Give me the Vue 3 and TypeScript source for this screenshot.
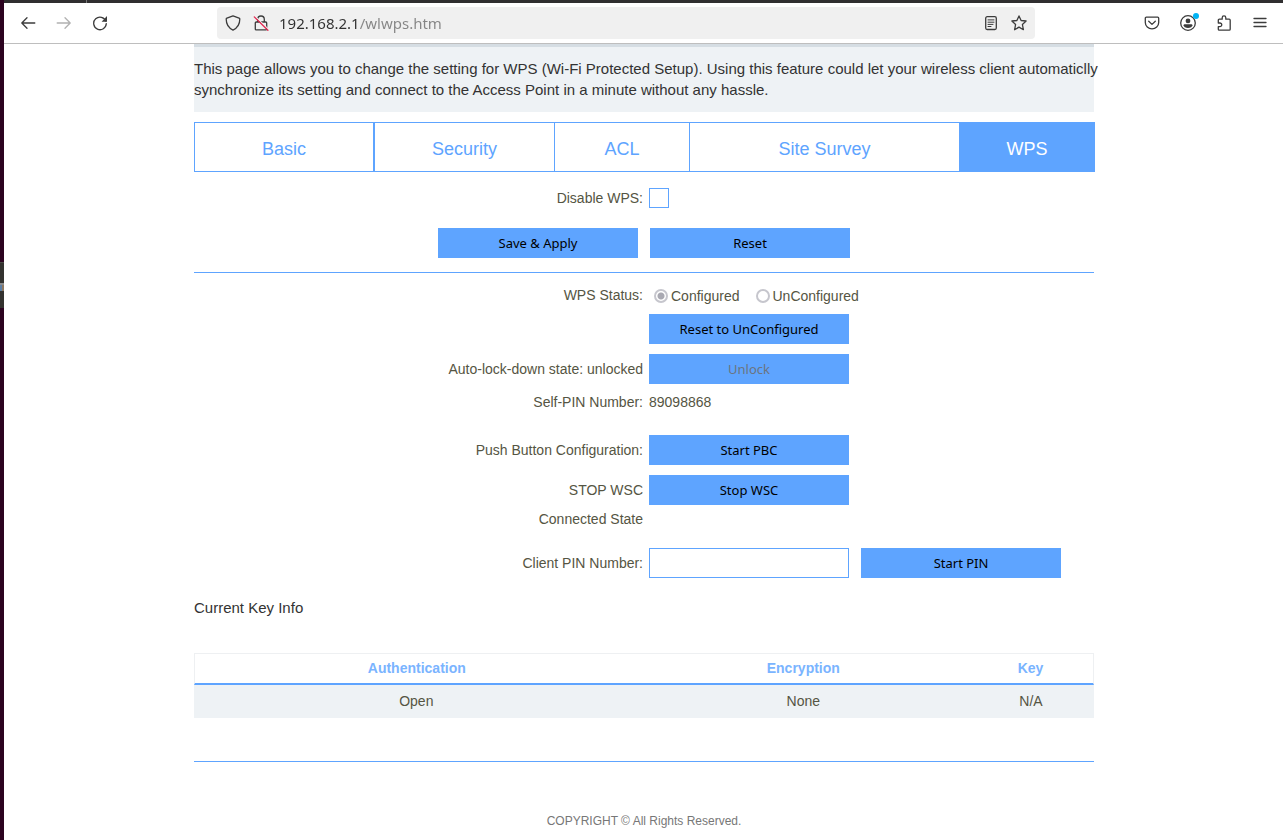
<script setup lang="ts">
import { ref } from 'vue'

interface Tab {
  label: string
  share: number
}

interface KeyInfo {
  authentication: string
  encryption: string
  key: string
}

const tabs: Tab[] = [
  { label: 'Basic', share: 20 },
  { label: 'Security', share: 20 },
  { label: 'ACL', share: 15 },
  { label: 'Site Survey', share: 30 },
  { label: 'WPS', share: 15 },
]
const activeTab = ref('WPS')

const keys: KeyInfo[] = [{ authentication: 'Open', encryption: 'None', key: 'N/A' }]

const address = ref('192.168.2.1/wlwps.htm')
const disableWps = ref(false)
const wpsStatus = ref('configured')
const clientPin = ref('')
</script>

<template>
  <div class="desktop">
    <div class="dock"><span class="dock-item"><i></i></span></div>
    <div class="window">
      <div class="titlebar"><span class="tab-divider"></span></div>
      <nav class="toolbar" aria-label="Browser">
        <button type="button" class="tool" aria-label="Back">
          <svg viewBox="0 0 16 16"><path d="M14.8 8H2M7 2.8 1.8 8 7 13.2" /></svg>
        </button>
        <button type="button" class="tool faded" aria-label="Forward">
          <svg viewBox="0 0 16 16"><path d="M1.2 8H14M9 2.8 14.2 8 9 13.2" /></svg>
        </button>
        <button type="button" class="tool" aria-label="Reload">
          <svg viewBox="0 0 16 16">
            <path d="M13.9 6.2A6.3 6.3 0 1 0 14.3 8.6" />
            <path class="solid" d="M15 1.1v5.2a.5.5 0 0 1-.5.5H9.6Z" />
          </svg>
        </button>

        <div class="urlbar">
          <button type="button" class="mini" aria-label="Tracking protection">
            <svg viewBox="0 0 16 16">
              <path d="M8 .9 14.1 3.2c.5.2.7.5.7.9C14.8 9 12.6 13 8 15.1 3.4 13 1.2 9 1.2 4.1c0-.4.2-.7.7-.9Z" />
            </svg>
          </button>
          <button type="button" class="mini" aria-label="Connection not secure">
            <svg viewBox="0 0 16 16">
              <path d="M4.7 7V4.3a3.3 3.3 0 0 1 6.6 0V7M3.3 7h9.4a1 1 0 0 1 1 1v5.9a1 1 0 0 1-1 1H3.300a1 1 0 0 1-1-1V8a1 1 0 0 1 1-1Z" />
              <path class="gap" d="M2.2 1.4 15.6 14.4" />
              <path class="slash" d="M1.3 1.9 14.9 15.2" />
            </svg>
          </button>
          <input v-model="address" class="address" type="text" aria-label="Address" spellcheck="false" />
          <button type="button" class="mini" aria-label="Reader view">
            <svg viewBox="0 0 16 16">
              <rect x="2.7" y="1.7" width="10.6" height="12.8" rx="1.5" />
              <path class="thin" d="M5 4.9h6M5 7.2h6M5 9.4h5M5 11.5h3" />
            </svg>
          </button>
          <button type="button" class="mini" aria-label="Bookmark this page">
            <svg viewBox="0 0 16 16">
              <path d="m8 .9 2.1 4.600 5 .5-3.700 3.500 1 5.200L8 12.1l-4.400 2.600 1-5.200L.9 6l5-.5Z" />
            </svg>
          </button>
        </div>

        <button type="button" class="tool" aria-label="Save to Pocket">
          <svg viewBox="0 0 16 16">
            <path d="M2.3 2.2h11.4a1 1 0 0 1 1 1v4.400a6.700 6.300 0 0 1-13.400 0V3.200a1 1 0 0 1 1-1Z" />
            <path d="M4.7 6.3 8 9.4l3.300-3.100" />
          </svg>
        </button>
        <button type="button" class="tool account" aria-label="Account">
          <svg viewBox="0 0 16 16">
            <circle cx="8" cy="8" r="7.3" />
            <circle class="solid" cx="8" cy="5.9" r="2.4" />
            <path class="solid" d="M4.6 9.3h6.8a1 1 0 0 1 1 1c0 1.500-2 2.800-4.400 2.800s-4.400-1.300-4.400-2.800a1 1 0 0 1 1-1Z" />
          </svg>
          <span class="dot"></span>
        </button>
        <button type="button" class="tool" aria-label="Extensions">
          <svg viewBox="0 0 16 16">
            <path d="M6.2 4.2V2.7a1.800 1.800 0 0 1 3.600 0V4.200h3.400a1 1 0 0 1 1 1v9a1 1 0 0 1-1 1H3.300a1 1 0 0 1-1-1v-2.500h1.600a1.800 1.800 0 0 0 0-3.700H2.300V5.200a1 1 0 0 1 1-1h2.900Z" />
          </svg>
        </button>
        <button type="button" class="tool" aria-label="Open application menu">
          <svg viewBox="0 0 16 16"><path d="M2 3.5h12M2 7.500h12M2 11.500h12" /></svg>
        </button>
      </nav>

      <div class="viewport">
        <main class="page">
          <div class="intro">
            <p>
              This page allows you to change the setting for WPS (Wi-Fi Protected Setup). Using this feature could let
              your wireless client automaticlly synchronize its setting and connect to the Access Point in a minute
              without any hassle.
            </p>
          </div>

          <nav class="tabs" aria-label="Wireless settings">
            <a
              v-for="tab in tabs"
              :key="tab.label"
              href="#"
              :class="{ active: tab.label === activeTab }"
              :style="{ width: tab.share + '%' }"
              @click.prevent="activeTab = tab.label"
              >{{ tab.label }}</a
            >
          </nav>

          <form @submit.prevent>
            <div class="row short first">
              <label for="disable-wps">Disable WPS:</label>
              <input id="disable-wps" v-model="disableWps" class="check" type="checkbox" />
            </div>
            <div class="actions">
              <button type="submit" class="btn">Save &amp; Apply</button>
              <button type="reset" class="btn">Reset</button>
            </div>
          </form>

          <hr />

          <form @submit.prevent>
            <div class="row short status">
              <span id="status-label">WPS Status:</span>
              <div class="radios" role="radiogroup" aria-labelledby="status-label">
                <label><input v-model="wpsStatus" type="radio" value="configured" disabled />Configured</label>
                <label><input v-model="wpsStatus" type="radio" value="unconfigured" disabled />UnConfigured</label>
              </div>
            </div>
            <div class="row after-status">
              <span></span>
              <button type="button" class="btn">Reset to UnConfigured</button>
            </div>
            <div class="row">
              <span>Auto-lock-down state: unlocked</span>
              <button type="button" class="btn" disabled>Unlock</button>
            </div>
            <div class="row short self-pin">
              <span>Self-PIN Number:</span>
              <span>89098868</span>
            </div>
            <div class="row push-button">
              <span>Push Button Configuration:</span>
              <button type="button" class="btn">Start PBC</button>
            </div>
            <div class="row">
              <span>STOP WSC</span>
              <button type="button" class="btn">Stop WSC</button>
            </div>
            <div class="row short connected">
              <span>Connected State</span>
            </div>
            <div class="row client-pin">
              <label for="client-pin">Client PIN Number:</label>
              <div class="pin">
                <input id="client-pin" v-model="clientPin" type="text" />
                <button type="button" class="btn">Start PIN</button>
              </div>
            </div>
          </form>

          <h2>Current Key Info</h2>
          <table>
            <colgroup>
              <col class="wide" />
              <col class="medium" />
              <col />
            </colgroup>
            <thead>
              <tr>
                <th scope="col">Authentication</th>
                <th scope="col">Encryption</th>
                <th scope="col">Key</th>
              </tr>
            </thead>
            <tbody>
              <tr v-for="(k, i) in keys" :key="i">
                <td>{{ k.authentication }}</td>
                <td>{{ k.encryption }}</td>
                <td>{{ k.key }}</td>
              </tr>
            </tbody>
          </table>

          <footer>COPYRIGHT © All Rights Reserved.</footer>
        </main>
      </div>
    </div>
  </div>
</template>

<style>
body {
  margin: 0;
  background: #fff;
}
</style>

<style scoped>
* {
  box-sizing: border-box;
}

.desktop {
  display: flex;
  min-height: 100vh;
  font: 14px/20px 'Liberation Sans', Arial, sans-serif;
  color: #555543;
}

.dock {
  flex: 0 0 4px;
  padding-top: 262px;
  background: #2c0320;
}

.dock-item {
  display: block;
  height: 46px;
  padding-top: 20px;
  border-top: 1px solid #4a4a45;
  background: #33322f;
}

.dock-item i {
  display: block;
  height: 8px;
  border-top: 2px solid #8c8c8c;
  background: linear-gradient(90deg, #5d7ea3 50%, #8d7760 50%);
}

.window {
  flex: 1;
  min-width: 0;
  background: #fff;
}

.titlebar {
  height: 3px;
  padding-left: 82px;
  background: #302f30;
}

.tab-divider {
  display: block;
  width: 1px;
  height: 3px;
  background: #777;
}

.toolbar {
  display: flex;
  align-items: center;
  height: 41px;
  padding: 0 5px 0 6px;
  border-bottom: 1px solid #bebebe;
}

.tool,
.mini {
  display: grid;
  place-items: center;
  flex: none;
  width: 36px;
  height: 32px;
  padding: 0;
  border: 0;
  background: none;
  color: #3c3c3c;
}

.mini {
  width: 28px;
}

.tool.faded {
  color: #b1b1b1;
}

.account {
  position: relative;
}

.dot {
  position: absolute;
  top: 6px;
  right: 7px;
  width: 6px;
  height: 6px;
  border-radius: 50%;
  background: #00b3f4;
}

svg {
  display: block;
  width: 16px;
  height: 16px;
  fill: none;
  stroke: currentColor;
  stroke-width: 1.3;
  stroke-linecap: round;
  stroke-linejoin: round;
}

svg .solid {
  fill: currentColor;
  stroke: none;
}

svg .thin {
  stroke-width: 1;
}

svg .gap {
  stroke: #f0f0f0;
}

svg .slash {
  stroke: #e22850;
}

.urlbar {
  display: flex;
  align-items: center;
  flex: 1;
  min-width: 0;
  height: 32px;
  margin: 0 99px;
  padding: 0 2px;
  border-radius: 4px;
  background: #f0f0f0;
}

/* The host is drawn darker than the path that follows it. */
.address {
  flex: 1;
  min-width: 0;
  height: 32px;
  padding: 0 4px;
  border: 0;
  outline: 0;
  background: linear-gradient(90deg, #303030 84px, #858585 84px);
  background-clip: text;
  color: transparent;
  font: 15px 'Noto Sans', 'Open Sans', sans-serif;
}

.viewport {
  padding-left: 1px;
}

.page {
  max-width: 900px;
  margin: 0 auto;
}

.intro {
  margin-bottom: 10px;
  padding: 11px 0 12px;
  border-top: 3px solid #d5dde3;
  background: #eef2f5;
  color: #333;
  font-size: 15px;
  line-height: 21px;
}

.intro p {
  margin: 0 -8px 0 0;
}

.tabs {
  display: flex;
}

.tabs a {
  padding-top: 4px;
  border: solid #5ea4ff;
  border-width: 1px 0 1px 1px;
  color: #5ea4ff;
  font-size: 18px;
  line-height: 44px;
  text-align: center;
  text-decoration: none;
}

.tabs a:first-child {
  border-right-width: 1px;
}

.tabs a:last-child {
  box-shadow: 1px 0 0 #5ea4ff;
}

.tabs .active {
  background: #5ea4ff;
  color: #fff;
}

.row {
  display: grid;
  grid-template-columns: 449fr 445fr;
  align-items: center;
  column-gap: 6px;
  min-height: 30px;
  margin-top: 10px;
}

.row > :first-child {
  text-align: right;
}

.row.short {
  min-height: 20px;
}

.row.first {
  margin: 16px 0 20px;
}

.row.status {
  align-items: start;
  margin-top: 0;
}

.row.after-status {
  margin-top: 7px;
}

.row.self-pin {
  margin-top: 8px;
}

.row.push-button {
  margin-top: 23px;
}

.row.connected {
  margin-top: 4px;
}

.row.client-pin {
  margin-top: 19px;
}

.check {
  appearance: none;
  width: 20px;
  height: 20px;
  margin: 0;
  border: 1px solid #5ea4ff;
  background: #fff;
}

.check:checked {
  background: #5ea4ff;
}

.actions {
  display: flex;
  justify-content: center;
  gap: 12px;
}

.btn {
  width: 200px;
  height: 30px;
  padding: 0;
  border: 0;
  background: #5ea4ff;
  color: #000;
  font: 13px 'Noto Sans', 'Open Sans', sans-serif;
}

.btn:disabled {
  color: #6b7480;
}

hr {
  height: 1px;
  margin: 14px 0 12px;
  border: 0;
  background: #5ea4ff;
}

.radios {
  display: flex;
  gap: 16px;
  padding-left: 5px;
  line-height: 22px;
}

.radios label {
  display: flex;
  align-items: center;
  gap: 3px;
}

.radios input {
  appearance: none;
  width: 14px;
  height: 14px;
  margin: 0;
  border: 2px solid #c6c6cd;
  border-radius: 50%;
  background: #fff;
}

.radios input:checked {
  background: radial-gradient(circle, #a9a9b2 3px, #fff 4px);
}

.pin {
  display: flex;
  gap: 12px;
}

.pin input {
  width: 200px;
  height: 30px;
  padding: 0 4px;
  border: 1px solid #5ea4ff;
  background: #fff;
  font: inherit;
}

h2 {
  margin: 20px 0 35px;
  color: #333;
  font-size: 15px;
  font-weight: 400;
  line-height: 20px;
}

table {
  width: 100%;
  border-collapse: separate;
  border-spacing: 0;
  table-layout: fixed;
}

.wide {
  width: 49.4%;
}

.medium {
  width: 36.6%;
}

th {
  height: 32px;
  padding: 0 0 2px;
  border-top: 1px solid #eef0f2;
  border-bottom: 2px solid #5ea4ff;
  color: #7ab4ff;
}

th:first-child {
  border-left: 1px solid #eef0f2;
}

th:last-child {
  border-right: 1px solid #eef0f2;
}

td {
  height: 33px;
  padding: 0 0 2px;
  background: #eef2f5;
  text-align: center;
}

footer {
  margin-top: 43px;
  padding-top: 49px;
  border-top: 1px solid #5ea4ff;
  color: #777;
  font-size: 12px;
  text-align: center;
}
</style>
